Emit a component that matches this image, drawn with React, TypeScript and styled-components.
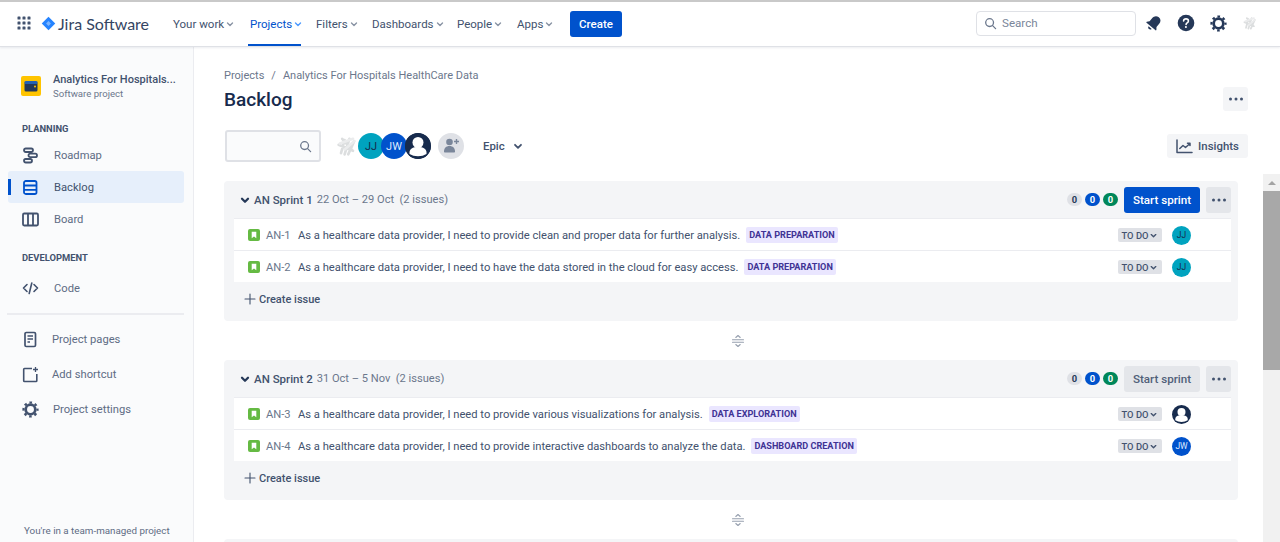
import React from "react";
import styled, { createGlobalStyle } from "styled-components";

const FONT = `Roboto, "Noto Sans", sans-serif`;

const GlobalStyle = createGlobalStyle`
  html, body { margin: 0; padding: 0; height: 100%; overflow: hidden; background: #fff; }
  body { font-family: ${FONT}; color: #172b4d; }
  * { box-sizing: border-box; }
`;

const Page = styled.div`
  width: 1280px;
  height: 542px;
  display: flex;
  flex-direction: column;
  overflow: hidden;
`;

// ---------- top bar ----------

const TopBar = styled.header`
  height: 47px;
  flex: none;
  display: flex;
  align-items: center;
  background: #fff;
  border-top: 2px solid #c9c9c9;
  border-bottom: 1px solid #dfe1e6;
  box-shadow: 0 1px 2px rgba(9, 30, 66, 0.08);
  position: relative;
  z-index: 2;
  padding: 0 14px 0 16px;
`;

const Brand = styled.div`
  display: flex;
  align-items: center;
  gap: 9px;
  width: 157px;
  flex: none;
  margin-top: -2px;
`;

const BrandLogo = styled.div`
  display: flex;
  align-items: center;
  gap: 2px;
`;

const BrandName = styled.span`
  font-family: "Lato", sans-serif;
  font-size: 16px;
  color: #344563;
`;

const Nav = styled.nav`
  display: flex;
  align-items: center;
  height: 100%;
`;

const NavItem = styled.div<{ $active?: boolean; $w: number }>`
  width: ${(p) => p.$w}px;
  height: 100%;
  position: relative;
  display: flex;
  align-items: center;
  gap: 1px;
  font-size: 11.5px;
  color: ${(p) => (p.$active ? "#0052cc" : "#42526e")};
  ${(p) =>
    p.$active &&
    `&::after { content: ""; position: absolute; left: -2px; width: 53px; bottom: 0; height: 2px; background: #0052cc; }`}
`;

const CreateBtn = styled.button`
  width: 52px;
  height: 26px;
  border: 0;
  border-radius: 3px;
  background: #0052cc;
  color: #fff;
  font: 500 11.5px ${FONT};
  padding: 0;
`;

const TopRight = styled.div`
  margin-left: auto;
  display: flex;
  align-items: center;
  margin-top: -2px;
`;

const SearchBox = styled.div`
  width: 160px;
  height: 25px;
  display: flex;
  align-items: center;
  gap: 5px;
  padding: 0 7px;
  border: 1px solid #dfe1e6;
  border-radius: 4px;
  font-size: 11.6px;
  color: #7a869a;
  margin-right: 2px;
`;

const TopIcon = styled.div`
  width: 32px;
  display: flex;
  justify-content: center;
  align-items: center;
`;

// ---------- sidebar ----------

const Body = styled.div`
  flex: 1;
  display: flex;
  min-height: 0;
`;

const Sidebar = styled.aside`
  width: 194px;
  flex: none;
  background: #fafbfc;
  border-right: 1px solid #ebecf0;
  display: flex;
  flex-direction: column;
  padding: 29px 9px 0 8px;
  position: relative;
`;

const ProjectHead = styled.div`
  display: flex;
  align-items: center;
  gap: 12px;
  padding-left: 13px;
  height: 20px;
  margin-bottom: 26px;
`;

const ProjectTitle = styled.div`
  font-size: 11px;
  font-weight: 500;
  color: #42526e;
  line-height: 14px;
  white-space: nowrap;
`;

const ProjectSub = styled.div`
  font-size: 9.6px;
  color: #6b778c;
  line-height: 13px;
`;

const SectionLabel = styled.div<{ $gap?: number; $after?: number }>`
  font-size: 9.4px;
  font-weight: 700;
  color: #42526e;
  padding-left: 14px;
  line-height: 14px;
  margin-top: ${(p) => p.$gap ?? 0}px;
  margin-bottom: ${(p) => p.$after ?? 3}px;
`;

const SideItem = styled.div<{ $active?: boolean; $h?: number; $gap?: number }>`
  height: ${(p) => p.$h ?? 32}px;
  display: flex;
  align-items: center;
  gap: ${(p) => p.$gap ?? 15}px;
  padding-left: 14px;
  font-size: 11.2px;
  border-radius: 3px;
  position: relative;
  background: ${(p) => (p.$active ? "#e6effb" : "transparent")};
  color: ${(p) => (p.$active ? "#42526e" : "#5e6c84")};
  ${(p) =>
    p.$active &&
    `&::before { content: ""; position: absolute; left: 0; top: 8px; bottom: 8px; width: 3px; background: #0052cc; }`}
`;

const SideDivider = styled.div`
  height: 2px;
  background: #ebecf0;
  margin: 9px 0 7px -1px;
`;

const SideFooter = styled.div`
  margin-top: auto;
  font-size: 9.8px;
  color: #5e6c84;
  padding-left: 16px;
  line-height: 14px;
  margin-bottom: 4px;
  white-space: nowrap;
`;

// ---------- main ----------

const Main = styled.main`
  flex: 1;
  min-width: 0;
  display: flex;
  flex-direction: column;
  padding-top: 22px;
`;

const PageHead = styled.div`
  padding: 0 32px 0 30px;
  position: relative;
`;

const Breadcrumbs = styled.div`
  font-size: 11px;
  color: #6b778c;
  line-height: 14px;
`;

const CrumbSlash = styled.span`
  margin: 0 7px;
`;

const TitleRow = styled.div`
  display: flex;
  align-items: center;
  justify-content: space-between;
  height: 30px;
  margin-top: 1px;
`;

const PageTitle = styled.h1`
  margin: 0;
  padding-top: 2px;
  font-size: 19px;
  font-weight: 500;
  color: #172b4d;
  line-height: 28px;
`;

const GhostButton = styled.div<{ $w: number }>`
  width: ${(p) => p.$w}px;
  height: 24px;
  border-radius: 3px;
  background: #f4f5f7;
  display: flex;
  align-items: center;
  justify-content: center;
  gap: 5px;
  color: #42526e;
  font-size: 11.4px;
  font-weight: 500;
`;

const Toolbar = styled.div`
  display: flex;
  align-items: center;
  justify-content: space-between;
  height: 32px;
  margin-top: 16px;
  margin-bottom: 19px;
`;

const ToolbarLeft = styled.div`
  display: flex;
  align-items: center;
`;

const FilterInput = styled.div`
  width: 96px;
  height: 32px;
  border: 2px solid #dfe1e6;
  border-radius: 3px;
  background: #fafbfc;
  display: flex;
  align-items: center;
  justify-content: flex-end;
  padding-right: 7px;
  margin-left: 1px;
  margin-right: 14px;
`;

const AvatarStack = styled.div`
  display: flex;
  align-items: center;
`;

const Avatar = styled.div<{ $bg: string; $fg?: string; $size?: number; $ml?: number; $fs?: number }>`
  width: ${(p) => p.$size ?? 26}px;
  height: ${(p) => p.$size ?? 26}px;
  border-radius: 50%;
  background: ${(p) => p.$bg};
  margin-left: ${(p) => p.$ml ?? 0}px;
  color: ${(p) => p.$fg ?? "#dfeaff"};
  font-size: ${(p) => p.$fs ?? 11}px;
  display: flex;
  align-items: center;
  justify-content: center;
  flex: none;
  overflow: hidden;
`;

const EpicFilter = styled.div`
  display: flex;
  align-items: center;
  gap: 7px;
  margin-left: 19px;
  font-size: 11.4px;
  font-weight: 500;
  color: #42526e;
`;

const ListArea = styled.div`
  flex: 1;
  min-height: 0;
  display: flex;
  margin-top: -7px;
`;

const SprintList = styled.div`
  flex: 1;
  min-width: 0;
  padding: 7px 25px 0 30px;
`;

const ScrollTrack = styled.div`
  width: 17px;
  flex: none;
  background: #f1f1f1;
  display: flex;
  flex-direction: column;
`;

const ScrollArrow = styled.div`
  height: 17px;
  display: flex;
  align-items: center;
  justify-content: center;
  &::before {
    content: "";
    border-left: 4px solid transparent;
    border-right: 4px solid transparent;
    border-bottom: 4px solid #a3a3a3;
  }
`;

const ScrollThumb = styled.div`
  height: 179px;
  background: #a8a8a8;
`;

const SprintCard = styled.section`
  background: #f4f5f7;
  border-radius: 4px;
  padding: 0 7px 0 10px;
  height: 140px;
  display: flex;
  flex-direction: column;
`;

const SprintHeader = styled.div`
  height: 37px;
  display: flex;
  align-items: center;
  flex: none;
  padding-left: 5px;
`;

const SprintName = styled.span`
  font-size: 11.5px;
  font-weight: 500;
  color: #42526e;
  margin-left: 3px;
`;

const SprintMeta = styled.span`
  font-size: 11.1px;
  color: #6b778c;
  margin-left: 4px;
  white-space: pre;
`;

const SprintActions = styled.div`
  margin-left: auto;
  display: flex;
  align-items: center;
`;

const Count = styled.span<{ $bg: string; $fg: string }>`
  min-width: 15px;
  height: 13px;
  padding: 0 3px;
  border-radius: 7px;
  background: ${(p) => p.$bg};
  color: ${(p) => p.$fg};
  font-size: 9.4px;
  font-weight: 700;
  line-height: 13px;
  text-align: center;
  margin-right: 3px;
`;

const StartButton = styled.button<{ $primary?: boolean }>`
  width: 76px;
  height: 26px;
  border: 0;
  padding: 0;
  margin-left: 3px;
  border-radius: 3px;
  background: ${(p) => (p.$primary ? "#0052cc" : "#e4e6ea")};
  color: ${(p) => (p.$primary ? "#fff" : "#505f79")};
  font: 500 11.6px ${FONT};
`;

const MoreButton = styled.div`
  width: 25px;
  height: 26px;
  margin-left: 6px;
  border-radius: 3px;
  background: #e4e6ea;
  display: flex;
  align-items: center;
  justify-content: center;
`;

const Rows = styled.div`
  background: #fff;
  border-top: 1px solid #ebecf0;
  flex: none;
`;

const Row = styled.div`
  height: 32px;
  display: flex;
  align-items: center;
  padding: 1px 0 0 14px;
  border-bottom: 1px solid #ebecf0;
  &:last-child {
    border-bottom-color: #f4f5f7;
  }
`;

const IssueKey = styled.span`
  font-size: 11.2px;
  color: #6b778c;
  margin-left: 6px;
  width: 32px;
  flex: none;
`;

const Summary = styled.span`
  font-size: 11.2px;
  color: #42526e;
  white-space: nowrap;
`;

const EpicTag = styled.span`
  background: #eae6ff;
  color: #403294;
  font-size: 9.1px;
  font-weight: 700;
  line-height: 16px;
  height: 16px;
  padding: 0 3px;
  margin-left: 6px;
  border-radius: 2px;
  white-space: nowrap;
`;

const RowRight = styled.div`
  margin-left: auto;
  display: flex;
  align-items: center;
  padding-right: 40px;
  gap: 10px;
`;

const Status = styled.div`
  width: 44px;
  height: 14px;
  border-radius: 2px;
  background: #dfe1e6;
  color: #42526e;
  font-size: 9.4px;
  font-weight: 500;
  display: flex;
  align-items: center;
  justify-content: center;
  gap: 1px;
`;

const CreateIssue = styled.div`
  flex: 1;
  display: flex;
  align-items: center;
  gap: 3px;
  padding: 0 0 6px 10px;
  font-size: 11px;
  font-weight: 500;
  color: #42526e;
`;

const DragHandle = styled.div`
  height: 39px;
  display: flex;
  align-items: center;
  justify-content: center;
  padding-left: 13px;
`;

const BlurWrap = styled.span`
  display: flex;
  filter: blur(0.7px);
`;

// ---------- icons ----------

const GridIcon = () => (
  <svg width="16" height="16" viewBox="0 0 16 16" fill="#42526e">
    {[2, 7, 12].flatMap((y) =>
      [2, 7, 12].map((x) => <rect key={`${x}-${y}`} x={x - 0.5} y={y - 0.5} width="3" height="3" rx="0.6" />)
    )}
  </svg>
);

const JiraMark = () => (
  <svg width="15" height="15" viewBox="0 0 16 16">
    <path d="M8 .8 15.200 8 8 15.200 .8 8Z" fill="#2684ff" />
    <path d="M8 5.400 10.600 8 8 10.600 5.400 8Z" fill="#fff" opacity="0.4" />
  </svg>
);

const Chevron = ({ size = 10, color = "#8993a4", sw = 1.4 }: { size?: number; color?: string; sw?: number }) => (
  <svg width={size} height={size} viewBox="0 0 10 10" fill="none" stroke={color} strokeWidth={sw} strokeLinecap="round" strokeLinejoin="round">
    <path d="M2.5 4 5 6.5 7.5 4" />
  </svg>
);

const SearchGlyph = ({ color = "#6b778c" }: { color?: string }) => (
  <svg width="13" height="13" viewBox="0 0 13 13" fill="none" stroke={color} strokeWidth="1.3" strokeLinecap="round">
    <circle cx="5.6" cy="5.6" r="3.9" />
    <path d="M8.6 8.6 11.6 11.6" />
  </svg>
);

const BellIcon = () => (
  <svg width="18" height="18" viewBox="0 0 18 18" fill="#253858">
    <g transform="rotate(40 9 9)">
      <path d="M9 1.500c2.900 0 4.500 2.100 4.500 4.800v4.200l1.800 2.300v.8H2.700v-.8l1.800-2.300V6.300C4.500 3.600 6.100 1.500 9 1.500Z" />
      <path d="M7 15h4c0 1.100-.9 1.900-2 1.900S7 16.100 7 15Z" />
    </g>
  </svg>
);

const HelpIcon = () => (
  <svg width="18" height="18" viewBox="0 0 18 18">
    <circle cx="9" cy="9" r="8.3" fill="#253858" />
    <path d="M6.600 7c.1-1.400 1.100-2.100 2.400-2.100 1.400 0 2.400.8 2.400 2 0 1-.6 1.500-1.300 2-.6.4-1 .7-1 1.500" fill="none" stroke="#fff" strokeWidth="1.600" strokeLinecap="round" />
    <circle cx="8.900" cy="13" r="1.050" fill="#fff" />
  </svg>
);

const GearIcon = ({ color = "#253858" }: { color?: string }) => (
  <svg width="17" height="17" viewBox="0 0 17 17" fill="none" stroke={color}>
    <circle cx="8.500" cy="8.500" r="4.800" strokeWidth="2.700" />
    <circle cx="8.500" cy="8.500" r="7" strokeWidth="2.200" strokeDasharray="2.600 2.900" strokeDashoffset="1.300" />
  </svg>
);

const WispAvatar = ({ size = 20 }: { size?: number }) => (
  <BlurWrap>
    <svg width={size} height={size} viewBox="0 0 20 20" fill="none" stroke="#dcdedf" strokeWidth="2.200" strokeLinecap="round">
      <path d="M5 16 8 5M8 17l4-13M11 17l5-11M3 9l12 5M6 4l8 9" />
      <path d="M4 8l11-4M8 13l8-7" stroke="#ebeced" />
    </svg>
  </BlurWrap>
);

const ProjectIcon = () => (
  <svg width="20" height="20" viewBox="0 0 20 20">
    <rect width="20" height="20" rx="2" fill="#ffc400" />
    <rect x="3.500" y="5" width="13" height="10.500" rx="1.500" fill="#253858" />
    <rect x="3.500" y="5" width="13" height="3" rx="1" fill="#2684ff" opacity="0.55" />
    <circle cx="14" cy="10.500" r="1" fill="#ffc400" />
  </svg>
);

const iconStroke = { fill: "none", stroke: "#42526e", strokeWidth: 1.8 };

const RoadmapIcon = () => (
  <svg width="17" height="17" viewBox="0 0 17 17" {...iconStroke}>
    <rect x="2" y="1.500" width="9" height="3.500" rx="1.700" />
    <rect x="6.500" y="6.700" width="8.500" height="3.500" rx="1.700" />
    <rect x="2" y="12" width="8" height="3.500" rx="1.700" />
  </svg>
);

const BacklogIcon = () => (
  <svg width="17" height="17" viewBox="0 0 17 17" fill="none" stroke="#0052cc" strokeWidth="1.800">
    <rect x="2" y="2" width="12.500" height="13" rx="1.800" />
    <path d="M2 6.500h13M2 10.800h13" />
  </svg>
);

const BoardIcon = () => (
  <svg width="17" height="17" viewBox="0 0 17 17" {...iconStroke}>
    <rect x="1" y="2.500" width="15" height="12" rx="1.200" />
    <path d="M6 2.500v12M11 2.500v12" />
  </svg>
);

const CodeIcon = () => (
  <svg width="17" height="17" viewBox="0 0 17 17" fill="none" stroke="#42526e" strokeWidth="1.600" strokeLinecap="round" strokeLinejoin="round">
    <path d="M5 4.500 1.500 8 5 11.500M12 4.500 15.500 8 12 11.500M9.800 3 7.200 13.500" />
  </svg>
);

const PagesIcon = () => (
  <svg width="17" height="17" viewBox="0 0 17 17" fill="none" stroke="#42526e" strokeWidth="1.700">
    <rect x="3" y="1.500" width="10.500" height="14" rx="1.300" />
    <path d="M5.500 5h5.500M5.500 8h5.500M5.500 11h2.500" />
  </svg>
);

const ShortcutIcon = () => (
  <svg width="17" height="17" viewBox="0 0 17 17" fill="none" stroke="#42526e" strokeWidth="1.600">
    <path d="M10 2.500H2.500a.8.8 0 0 0-.8.8v11.400c0 .4.400.8.800.8h11.500c.4 0 .8-.4.800-.8V8" />
    <path d="M13.500 1v5M11 3.500h5" strokeWidth="1.300" />
  </svg>
);

const DotsIcon = ({ color = "#42526e" }: { color?: string }) => (
  <svg width="16" height="4" viewBox="0 0 16 4" fill={color}>
    <circle cx="2.500" cy="2" r="1.500" />
    <circle cx="8" cy="2" r="1.500" />
    <circle cx="13.500" cy="2" r="1.500" />
  </svg>
);

const InsightsIcon = () => (
  <svg width="17" height="15" viewBox="0 0 17 15" fill="none" stroke="#42526e" strokeWidth="1.500" strokeLinecap="round" strokeLinejoin="round">
    <path d="M1 1v12.500h15" />
    <path d="M3.800 9.500 7 6.500l2.500 2L14 4.500M11.500 4.300H14v2.300" />
  </svg>
);

const AddPeopleIcon = () => (
  <svg width="18" height="18" viewBox="0 0 18 18" fill="#7a869a">
    <circle cx="7.500" cy="5" r="3.300" />
    <path d="M2 14.500c0-3.400 2-5.500 5.500-5.500s5.500 2.100 5.500 5.500c0 .6-.4 1-1 1H3c-.6 0-1-.4-1-1Z" />
    <path d="M14.500 2v5M12 4.500h5" stroke="#7a869a" strokeWidth="1.400" fill="none" />
  </svg>
);

const PersonAvatar = ({ size }: { size: number }) => (
  <svg width={size} height={size} viewBox="0 0 26 26">
    <circle cx="13" cy="13" r="13" fill="#172b4d" />
    <circle cx="13" cy="9.500" r="5.500" fill="#fff" />
    <path d="M4.500 19.500c0-3.500 3-5.500 8.500-5.500s8.500 2 8.500 5.500V21a12 8 0 0 1-17 0Z" fill="#fff" />
  </svg>
);

const StoryIcon = () => (
  <svg width="12" height="12" viewBox="0 0 12 12">
    <rect width="12" height="12" rx="2" fill="#65ba43" />
    <path d="M3.700 2.800h4.600v6.400L6 7.600 3.700 9.200Z" fill="#fff" />
  </svg>
);

const PlusIcon = () => (
  <svg width="12" height="12" viewBox="0 0 12 12" stroke="#42526e" strokeWidth="1.100" strokeLinecap="round">
    <path d="M6 1v10M1 6h10" />
  </svg>
);

const DragIcon = () => (
  <svg width="14" height="14" viewBox="0 0 14 14" fill="none" stroke="#97a0af" strokeWidth="1.100" strokeLinecap="round" strokeLinejoin="round">
    <path d="M1.500 5.800h11M1.500 8.200h11M4.800 3.500 7 1.500l2.200 2M4.800 10.500 7 12.500l2.200-2" />
  </svg>
);

// ---------- data ----------

type AssigneeKind = "jj" | "jw" | "person";

interface Issue {
  key: string;
  summary: string;
  epic: string;
  assignee: AssigneeKind;
}

interface Sprint {
  name: string;
  dates: string;
  primary: boolean;
  issues: Issue[];
}

const sprints: Sprint[] = [
  {
    name: "AN Sprint 1",
    dates: "22 Oct – 29 Oct",
    primary: true,
    issues: [
      { key: "AN-1", summary: "As a healthcare data provider, I need to provide clean and proper data for further analysis.", epic: "DATA PREPARATION", assignee: "jj" },
      { key: "AN-2", summary: "As a healthcare data provider, I need to have the data stored in the cloud for easy access.", epic: "DATA PREPARATION", assignee: "jj" },
    ],
  },
  {
    name: "AN Sprint 2",
    dates: "31 Oct – 5 Nov",
    primary: false,
    issues: [
      { key: "AN-3", summary: "As a healthcare data provider, I need to provide various visualizations for analysis.", epic: "DATA EXPLORATION", assignee: "person" },
      { key: "AN-4", summary: "As a healthcare data provider, I need to provide interactive dashboards to analyze the data.", epic: "DASHBOARD CREATION", assignee: "jw" },
    ],
  },
];

const navItems = [
  { label: "Your work", w: 77 },
  { label: "Projects", w: 66, active: true },
  { label: "Filters", w: 56 },
  { label: "Dashboards", w: 85 },
  { label: "People", w: 60 },
  { label: "Apps", w: 53 },
];

const Assignee = ({ kind }: { kind: AssigneeKind }) => {
  if (kind === "person") return <PersonAvatar size={19} />;
  return kind === "jj" ? (
    <Avatar $bg="#00a3bf" $fg="#172b4d" $size={19} $fs={8.5}>JJ</Avatar>
  ) : (
    <Avatar $bg="#0052cc" $size={19} $fs={8.5}>JW</Avatar>
  );
};

const SprintSection = ({ sprint }: { sprint: Sprint }) => (
  <SprintCard>
    <SprintHeader>
      <Chevron size={12} color="#253858" sw={1.900} />
      <SprintName>{sprint.name}</SprintName>
      <SprintMeta>{`${sprint.dates}  (${sprint.issues.length} issues)`}</SprintMeta>
      <SprintActions>
        <Count $bg="#dfe1e6" $fg="#253858">0</Count>
        <Count $bg="#0052cc" $fg="#fff">0</Count>
        <Count $bg="#00875a" $fg="#fff">0</Count>
        <StartButton $primary={sprint.primary}>Start sprint</StartButton>
        <MoreButton><DotsIcon /></MoreButton>
      </SprintActions>
    </SprintHeader>
    <Rows>
      {sprint.issues.map((issue) => (
        <Row key={issue.key}>
          <StoryIcon />
          <IssueKey>{issue.key}</IssueKey>
          <Summary>{issue.summary}</Summary>
          <EpicTag>{issue.epic}</EpicTag>
          <RowRight>
            <Status>TO DO <Chevron size={9} color="#42526e" sw={1.500} /></Status>
            <Assignee kind={issue.assignee} />
          </RowRight>
        </Row>
      ))}
    </Rows>
    <CreateIssue><PlusIcon />Create issue</CreateIssue>
  </SprintCard>
);

export default function App() {
  return (
    <>
      <GlobalStyle />
      <Page>
        <TopBar>
          <Brand>
            <GridIcon />
            <BrandLogo>
              <JiraMark />
              <BrandName>Jira Software</BrandName>
            </BrandLogo>
          </Brand>
          <Nav>
            {navItems.map((item) => (
              <NavItem key={item.label} $w={item.w} $active={item.active}>
                {item.label}
                <Chevron color={item.active ? "#4c9aff" : "#8993a4"} />
              </NavItem>
            ))}
            <CreateBtn>Create</CreateBtn>
          </Nav>
          <TopRight>
            <SearchBox><SearchGlyph />Search</SearchBox>
            <TopIcon><BellIcon /></TopIcon>
            <TopIcon><HelpIcon /></TopIcon>
            <TopIcon><GearIcon /></TopIcon>
            <TopIcon><WispAvatar size={16} /></TopIcon>
          </TopRight>
        </TopBar>
        <Body>
          <Sidebar>
            <ProjectHead>
              <ProjectIcon />
              <div>
                <ProjectTitle>Analytics For Hospitals...</ProjectTitle>
                <ProjectSub>Software project</ProjectSub>
              </div>
            </ProjectHead>
            <SectionLabel>PLANNING</SectionLabel>
            <SideItem><RoadmapIcon />Roadmap</SideItem>
            <SideItem $active><BacklogIcon />Backlog</SideItem>
            <SideItem><BoardIcon />Board</SideItem>
            <SectionLabel $gap={16} $after={7}>DEVELOPMENT</SectionLabel>
            <SideItem><CodeIcon />Code</SideItem>
            <SideDivider />
            <SideItem $h={35} $gap={13}><PagesIcon />Project pages</SideItem>
            <SideItem $h={35} $gap={13}><ShortcutIcon />Add shortcut</SideItem>
            <SideItem $h={34} $gap={14}><GearIcon color="#42526e" />Project settings</SideItem>
            <SideFooter>You're in a team-managed project</SideFooter>
          </Sidebar>
          <Main>
            <PageHead>
              <Breadcrumbs>
                Projects<CrumbSlash>/</CrumbSlash>Analytics For Hospitals HealthCare Data
              </Breadcrumbs>
              <TitleRow>
                <PageTitle>Backlog</PageTitle>
                <GhostButton $w={25}><DotsIcon /></GhostButton>
              </TitleRow>
              <Toolbar>
                <ToolbarLeft>
                  <FilterInput><SearchGlyph /></FilterInput>
                  <AvatarStack>
                    <WispAvatar size={24} />
                    <Avatar $bg="#00a3bf" $fg="#172b4d" $ml={-1}>JJ</Avatar>
                    <Avatar $bg="#0052cc" $ml={-3}>JW</Avatar>
                    <Avatar $bg="#172b4d" $ml={-2}><PersonAvatar size={26} /></Avatar>
                    <Avatar $bg="#dfe1e6" $ml={7}><AddPeopleIcon /></Avatar>
                  </AvatarStack>
                  <EpicFilter>Epic <Chevron size={12} color="#42526e" sw={1.500} /></EpicFilter>
                </ToolbarLeft>
                <GhostButton $w={81}><InsightsIcon />Insights</GhostButton>
              </Toolbar>
            </PageHead>
            <ListArea>
              <SprintList>
                {sprints.map((sprint) => (
                  <React.Fragment key={sprint.name}>
                    <SprintSection sprint={sprint} />
                    <DragHandle><DragIcon /></DragHandle>
                  </React.Fragment>
                ))}
                <SprintCard />
              </SprintList>
              <ScrollTrack>
                <ScrollArrow />
                <ScrollThumb />
              </ScrollTrack>
            </ListArea>
          </Main>
        </Body>
      </Page>
    </>
  );
}
